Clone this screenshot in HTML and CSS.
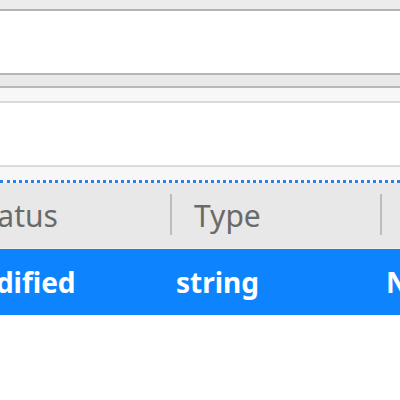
FILE: index.html
```html
<!DOCTYPE html>
<html>
<head>
<meta charset="utf-8">
<link rel="stylesheet" href="styles.css">
</head>
<body>
<div class="topbar"></div>
<div class="pane"></div>
<div class="toolbar"></div>
<div class="subbar"></div>
<div class="pane"></div>
<div class="focusbar"></div>
<div class="table">
  <div class="header">
    <div class="hcell c1">Status</div>
    <div class="hcell c2">Type</div>
    <div class="hcell c3">Name</div>
  </div>
  <div class="row selected">
    <div class="cell c1">Modified</div>
    <div class="cell c2">string</div>
    <div class="cell c3">Name</div>
  </div>
</div>
</body>
</html>
```
FILE: styles.css
```css
html, body {
  margin: 0;
  padding: 0;
  background: #ffffff;
  overflow: hidden;
  width: 400px;
  height: 400px;
}
body {
  font-family: "Noto Sans", "DejaVu Sans", sans-serif;
}
.topbar {
  height: 9px;
  background: #ececec;
  border-bottom: 2px solid #b3b3b3;
}
.pane {
  height: 62px;
  background: #ffffff;
}
.toolbar {
  height: 11px;
  background: #e9e9e9;
  border-top: 2px solid #b5b5b5;
  border-bottom: 2px solid #b8b8b8;
}
.subbar {
  height: 13px;
  background: #f7f7f7;
  border-bottom: 2px solid #d8d8de;
}
.focusbar {
  height: 13px;
  background: #f7f7f7;
  border-top: 2px solid #dadada;
  border-bottom: 3px dotted #2b80ea;
}
.table {
  margin-left: -53px;
  width: 560px;
}
.header {
  display: flex;
  height: 66px;
  background: #e8e8e8;
  box-sizing: border-box;
  border-bottom: 1px solid #f0f0f0;
}
.hcell {
  display: flex;
  align-items: center;
  box-sizing: border-box;
  padding-left: 23px;
  font-size: 30px;
  color: #6a6a6a;
  position: relative;
}
.hcell.c1::after, .hcell.c2::after {
  content: "";
  position: absolute;
  right: -1px;
  top: 11px;
  bottom: 13px;
  width: 2px;
  background: #bdbdbd;
}
.c1 { width: 224px; flex: none; }
.c2 { width: 210px; flex: none; }
.c3 { flex: 1; }
.row {
  display: flex;
  height: 66px;
}
.row.selected {
  background: #0d84fe;
  color: #ffffff;
}
.cell {
  display: flex;
  align-items: center;
  box-sizing: border-box;
  padding-left: 5px;
  font-size: 28px;
  font-weight: bold;
}
```
